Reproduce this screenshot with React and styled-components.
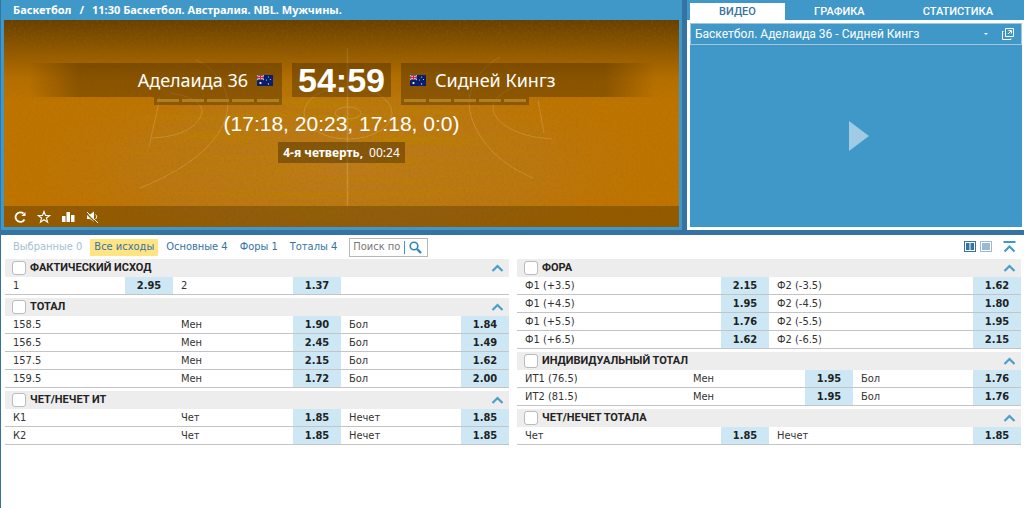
import { useState, useId } from "react"
import styled, { createGlobalStyle } from "styled-components"

const GlobalStyle = createGlobalStyle`
    * {
        box-sizing: border-box;
    }
    body {
        margin: 0;
        background: #fff;
        color: #333;
        font-family: "DejaVu Sans Condensed", "DejaVu Sans", sans-serif;
        font-size: 11px;
        line-height: 14px;
    }
    button, input {
        font: inherit;
        color: inherit;
        margin: 0;
        padding: 0;
        border: 0;
        background: none;
    }
    button {
        cursor: pointer;
    }
`

const Page = styled.div`
    min-height: 100vh;
    border-left: 1px solid #3573a5;
`

const Top = styled.div`
    display: grid;
    grid-template-columns: minmax(0, 681fr) minmax(0, 337fr);
    gap: 5px;
    background: #3573a5;
    padding-bottom: 5px;
    font-family: "Noto Sans", sans-serif;
`

const Game = styled.section`
    display: flex;
    flex-direction: column;
    background: #4098c8;
    padding: 0 3px 3px;
`

const Crumbs = styled.nav`
    display: flex;
    gap: 8px;
    height: 20px;
    padding: 0 9px;
    color: #fff;
    font-weight: bold;
    line-height: 20px;
    white-space: nowrap;
    a {
        color: inherit;
        text-decoration: none;
    }
`

const Court = styled.div`
    position: relative;
    flex: 1;
    display: flex;
    flex-direction: column;
    color: #fff;
    padding-top: 43px;
    background: #bf7400;
`

const CourtPicture = styled.svg`
    position: absolute;
    inset: 0;
    width: 100%;
    height: 100%;
`

const Board = styled.div`
    position: relative;
    flex: 1;
    display: flex;
    flex-direction: column;
    align-items: center;
`

const ScoreLine = styled.div`
    width: 100%;
    display: grid;
    grid-template-columns: 1fr auto 1fr;
    gap: 10px;
    align-items: start;
    padding: 0 24px;
`

const Side = styled.div`
    display: flex;
    flex-direction: column;
    align-items: ${props => props.$home ? "flex-end" : "flex-start"};
`

const TeamName = styled.div`
    width: 100%;
    height: 34px;
    display: flex;
    flex-direction: ${props => props.$home ? "row" : "row-reverse"};
    align-items: center;
    justify-content: flex-end;
    gap: 9px;
    padding: 0 9px;
    font-size: 18px;
    white-space: nowrap;
    background: linear-gradient(${props => props.$home ? "to right" : "to left"}, rgba(60, 35, 0, 0), rgba(60, 35, 0, 0.36) 20%);
`

const Fouls = styled.div`
    display: flex;
    gap: 3px;
    height: 8px;
    padding: 2px 3px 3px;
    background: rgba(60, 35, 0, 0.36);
    span {
        width: 22px;
        background: #b08020;
    }
`

const Score = styled.div`
    height: 34px;
    padding: 0 6px;
    font: bold 34px/34px "Liberation Sans", sans-serif;
    background: rgba(60, 35, 0, 0.36);
`

const Periods = styled.div`
    margin-top: 5px;
    font: 21px/28px "Liberation Sans", sans-serif;
`

const Clock = styled.div`
    display: flex;
    gap: 6px;
    margin-top: 4px;
    padding: 0 5px;
    font-size: 12px;
    line-height: 21px;
    background: rgba(60, 35, 0, 0.42);
`

const CourtBar = styled.div`
    position: relative;
    display: flex;
    align-items: center;
    gap: 10px;
    height: 21px;
    padding: 0 9px;
    background: rgba(40, 25, 0, 0.28);
    button {
        display: flex;
    }
`

const Media = styled.section`
    display: flex;
    flex-direction: column;
    background: #4098c8;
`

const Tabs = styled.div`
    display: flex;
    height: 20px;
    padding: 3px 2px 0 3px;
`

const Tab = styled.button`
    flex: 1 1 auto;
    font-family: Roboto, sans-serif;
    font-weight: 500;
    line-height: 17px;
    color: ${props => props.$active ? "#3573a5" : "#fff"};
    background: ${props => props.$active ? "#fff" : "transparent"};
`

const Frame = styled.div`
    flex: 1;
    display: flex;
    flex-direction: column;
    border: 3px solid #fff;
    border-right-width: 2px;
`

const VideoTitle = styled.div`
    display: flex;
    align-items: center;
    gap: 13px;
    height: 22px;
    padding: 0 7px 0 4px;
    border: 1px solid #a3c4d9;
    color: #fff;
    font-family: Roboto, sans-serif;
    font-size: 12px;
    span {
        flex: 1;
        white-space: nowrap;
    }
    button {
        display: flex;
    }
`

const Screen = styled.div`
    flex: 1;
    display: flex;
    align-items: center;
    justify-content: center;
    min-height: 182px;
    padding-left: 5px;
    button {
        display: flex;
    }
`

const Filters = styled.div`
    display: flex;
    align-items: center;
    gap: 4px;
    height: 24px;
    padding: 0 8px;
`

const Filter = styled.button`
    height: 17px;
    padding: 0 4px;
    white-space: nowrap;
    color: ${props => props.$muted ? "#a5bfd2" : "#3573a5"};
    background: ${props => props.$active ? "#ffe484" : "transparent"};
`

const Search = styled.form`
    display: flex;
    align-items: center;
    width: 79px;
    height: 19px;
    margin-left: 4px;
    padding: 0 5px 0 3px;
    border: 1px solid #b8b8b8;
    input {
        width: 52px;
        height: 13px;
        border-right: 1px solid #4098c8;
        outline: none;
    }
    input::placeholder {
        color: #777;
        opacity: 1;
    }
    button {
        display: flex;
        margin-left: 4px;
    }
`

const ViewButtons = styled.div`
    display: flex;
    gap: 4px;
    margin-left: auto;
    button {
        display: flex;
    }
    button:last-child {
        margin-left: 7px;
    }
`

const Markets = styled.div`
    display: grid;
    grid-template-columns: 1fr 1fr;
    gap: 8px;
    align-items: start;
    padding: 0 3px 0 4px;
`

const MarketBox = styled.section`
    margin-bottom: 3px;
`

const MarketHead = styled.div`
    display: flex;
    align-items: center;
    height: 18px;
    padding: 0 5px 0 7px;
    background: #ededed;
    label {
        flex: 1;
        padding-left: 4px;
        color: #222;
        font-family: Roboto, sans-serif;
        font-weight: bold;
        text-transform: uppercase;
    }
    button {
        display: flex;
    }
`

const Check = styled.input`
    appearance: none;
    width: 14px;
    height: 14px;
    border: 1px solid #bbb;
    border-radius: 3px;
    background: #fff;
    &:checked {
        background: #4098c8;
    }
`

const Table = styled.table`
    width: 100%;
    table-layout: fixed;
    border-collapse: separate;
    border-spacing: 0;
    td {
        height: 18px;
        padding: 0 0 0 8px;
        border-bottom: 1px solid #c4c4c4;
        white-space: nowrap;
    }
    td.price {
        padding: 0;
        background: #cde8f4;
    }
`

const Price = styled.button`
    display: block;
    width: 100%;
    height: 17px;
    color: #222;
    font-weight: bold;
    text-align: center;
`

const layouts = {
    pairThird: ["", "48px", "", "48px", "33.33%"],
    lineThird: ["33.33%", "", "48px", "", "48px"],
    half: ["", "48px", "", "48px"]
}

const leftMarkets = [
    {
        title: "Фактический исход",
        layout: "pairThird",
        rows: [["1", 2.95, "2", 1.37, ""]]
    },
    {
        title: "Тотал",
        layout: "lineThird",
        rows: [
            ["158.5", "Мен", 1.90, "Бол", 1.84],
            ["156.5", "Мен", 2.45, "Бол", 1.49],
            ["157.5", "Мен", 2.15, "Бол", 1.62],
            ["159.5", "Мен", 1.72, "Бол", 2.00]
        ]
    },
    {
        title: "Чет/нечет ИТ",
        layout: "lineThird",
        rows: [
            ["К1", "Чет", 1.85, "Нечет", 1.85],
            ["К2", "Чет", 1.85, "Нечет", 1.85]
        ]
    }
]

const rightMarkets = [
    {
        title: "Фора",
        layout: "half",
        rows: [
            ["Ф1 (+3.5)", 2.15, "Ф2 (-3.5)", 1.62],
            ["Ф1 (+4.5)", 1.95, "Ф2 (-4.5)", 1.80],
            ["Ф1 (+5.5)", 1.76, "Ф2 (-5.5)", 1.95],
            ["Ф1 (+6.5)", 1.62, "Ф2 (-6.5)", 2.15]
        ]
    },
    {
        title: "Индивидуальный тотал",
        layout: "lineThird",
        rows: [
            ["ИТ1 (76.5)", "Мен", 1.95, "Бол", 1.76],
            ["ИТ2 (81.5)", "Мен", 1.95, "Бол", 1.76]
        ]
    },
    {
        title: "Чет/нечет тотала",
        layout: "half",
        rows: [["Чет", 1.85, "Нечет", 1.85]]
    }
]

const Flag = () => (
    <svg width="16" height="11" viewBox="0 0 16 11">
        <rect width="16" height="11" fill="#0a1f6b"/>
        <path d="M0 0L7 5M7 0L0 5" stroke="#fff" strokeWidth="0.8"/>
        <path d="M3.5 0V5M0 2.5H7" stroke="#f3c6d0" strokeWidth="1.8"/>
        <path d="M3.5 0V5M0 2.5H7" stroke="#e0203a" strokeWidth="1"/>
        <circle cx="3.5" cy="8" r="1.1" fill="#fff"/>
        <g fill="#c9d0ea">
            <circle cx="11.5" cy="2" r="0.6"/>
            <circle cx="9.5" cy="5" r="0.6"/>
            <circle cx="13.5" cy="4.5" r="0.6"/>
            <circle cx="11.5" cy="9" r="0.7"/>
        </g>
    </svg>
)

const CourtArt = () => (
    <CourtPicture viewBox="0 0 675 207" preserveAspectRatio="none" aria-hidden="true">
        <defs>
            <linearGradient id="shade" x1="0" y1="0" x2="0" y2="1">
                <stop offset="0" stopColor="#3a2400" stopOpacity="0.66"/>
                <stop offset="0.1" stopColor="#3a2400" stopOpacity="0.45"/>
                <stop offset="0.28" stopColor="#3a2400" stopOpacity="0.08"/>
                <stop offset="0.4" stopColor="#3a2400" stopOpacity="0"/>
            </linearGradient>
            <radialGradient id="light" cx="0.5" cy="0.7" r="0.5">
                <stop offset="0" stopColor="#bd7d26" stopOpacity="0.8"/>
                <stop offset="0.6" stopColor="#ba781c" stopOpacity="0.6"/>
                <stop offset="1" stopColor="#bf7400" stopOpacity="0"/>
            </radialGradient>
            <radialGradient id="planks">
                <stop offset="0.3" stopColor="#fff"/>
                <stop offset="1" stopColor="#000"/>
            </radialGradient>
            <mask id="middle">
                <ellipse cx="330" cy="125" rx="260" ry="95" fill="url(#planks)"/>
            </mask>
            <filter id="grain" x="0" y="0" width="100%" height="100%">
                <feTurbulence type="fractalNoise" baseFrequency="0.4" numOctaves="2" seed="4"/>
                <feColorMatrix values="0 0 0 0 0.3  0 0 0 0 0.15  0 0 0 0 0  0.6 0 0 0 -0.26"/>
            </filter>
            <filter id="wood" x="0" y="0" width="100%" height="100%">
                <feTurbulence type="fractalNoise" baseFrequency="0.008 0.14" numOctaves="3" seed="9"/>
                <feColorMatrix values="0 0 0 0 0.5  0 0 0 0 0.22  0 0 0 0 0  2.2 0 0 0 -0.85"/>
            </filter>
        </defs>
        <rect width="675" height="207" fill="url(#light)"/>
        <g mask="url(#middle)">
            <rect width="675" height="207" filter="url(#wood)"/>
        </g>
        <g fill="none" stroke="#e0b878" strokeOpacity="0.36">
            <path d="M343.5 28V186" strokeWidth="1.5"/>
            <ellipse cx="344" cy="93" rx="44" ry="26"/>
            <ellipse cx="344" cy="93" rx="13" ry="6"/>
            <path d="M192 40C214 50 223 68 224 85C222 118 190 146 136 168"/>
            <path d="M156 77L145 127M166 73C186 76 198 82 198 92C195 107 176 117 148 118"/>
            <path d="M496 37C476 48 465 66 465 84C467 112 490 142 529 158"/>
            <path d="M534 80L540 113M513 66C497 72 488 80 489 90C493 105 515 117 548 119"/>
        </g>
        <rect width="675" height="207" fill="url(#shade)"/>
        <rect width="675" height="207" filter="url(#grain)"/>
    </CourtPicture>
)

const Chevron = () => (
    <svg width="13" height="8" viewBox="0 0 13 8">
        <path d="M1.500 7L6.500 2L11.500 7" fill="none" stroke="#4a9fcc" strokeWidth="2.200"/>
    </svg>
)

const FoulMarks = () => (
    <Fouls>
        {[1, 2, 3, 4, 5].map(n => <span key={n}/>)}
    </Fouls>
)

const Market = (props) => {

    const id = useId()
    const [open, setOpen] = useState(true)

    return (
        <MarketBox>
            <MarketHead>
                <Check type="checkbox" id={id}/>
                <label htmlFor={id}>{props.market.title}</label>
                <button aria-label="Свернуть" onClick={() => setOpen(!open)}><Chevron/></button>
            </MarketHead>
            {open && <Table>
                <colgroup>
                    {layouts[props.market.layout].map((width, i) => <col key={i} width={width || undefined}/>)}
                </colgroup>
                <tbody>
                    {props.market.rows.map((row, r) => (
                        <tr key={r}>
                            {row.map((cell, i) => typeof cell === "number"
                                ? <td key={i} className="price"><Price>{cell.toFixed(2)}</Price></td>
                                : <td key={i}>{cell}</td>
                            )}
                        </tr>
                    ))}
                </tbody>
            </Table>}
        </MarketBox>
    )
}

const Scoreboard = () => (
    <Game>
        <Crumbs>
            <a href="#basketball">Баскетбол</a>
            <span>/</span>
            <a href="#nbl">11:30 Баскетбол. Австралия. NBL. Мужчины.</a>
        </Crumbs>
        <Court>
            <CourtArt/>
            <Board>
                <ScoreLine>
                    <Side $home>
                        <TeamName $home>Аделаида 36<Flag/></TeamName>
                        <FoulMarks/>
                    </Side>
                    <Score>54:59</Score>
                    <Side>
                        <TeamName>Сидней Кингз<Flag/></TeamName>
                        <FoulMarks/>
                    </Side>
                </ScoreLine>
                <Periods>(17:18, 20:23, 17:18, 0:0)</Periods>
                <Clock><b>4-я четверть,</b><span>00:24</span></Clock>
            </Board>
            <CourtBar>
                <button aria-label="Обновить">
                    <svg width="14" height="14" viewBox="0 0 14 14">
                        <path d="M11.500 9.500A4.800 4.800 0 1 1 10.500 3.500" fill="none" stroke="#fff" strokeWidth="1.800"/>
                        <path d="M12.500 2V6H8.500Z" fill="#fff"/>
                    </svg>
                </button>
                <button aria-label="В избранное">
                    <svg width="14" height="14" viewBox="0 0 14 14">
                        <path d="M7 1.500L8.500 5.500H12.700L9.400 8L10.600 12.200L7 9.700L3.400 12.200L4.600 8L1.300 5.500H5.500Z" fill="none" stroke="#fff" strokeWidth="1.100"/>
                    </svg>
                </button>
                <button aria-label="Статистика">
                    <svg width="14" height="14" viewBox="0 0 14 14">
                        <path d="M1 6H4.500V12H1ZM5.500 2H9V12H5.500ZM10 5H13.500V12H10Z" fill="#fff"/>
                    </svg>
                </button>
                <button aria-label="Включить звук">
                    <svg width="14" height="14" viewBox="0 0 14 14">
                        <path d="M2 4.500H5L9 1.500V12L5 9H2Z" fill="#fff"/>
                        <path d="M10.500 4.500C12 5.500 12 8 10.500 9" fill="none" stroke="#fff"/>
                        <path d="M1 3L11 13" stroke="#8f5900" strokeWidth="1.200"/>
                        <path d="M2 2L13 13" stroke="#fff" strokeWidth="1"/>
                    </svg>
                </button>
            </CourtBar>
        </Court>
    </Game>
)

const MediaPanel = () => {

    const [tab, setTab] = useState("ВИДЕО")

    return (
        <Media>
            <Tabs>
                {["ВИДЕО", "ГРАФИКА", "СТАТИСТИКА"].map(name => (
                    <Tab key={name} $active={tab === name} onClick={() => setTab(name)}>{name}</Tab>
                ))}
            </Tabs>
            <Frame>
                <VideoTitle>
                    <span>Баскетбол. Аделаида 36 - Сидней Кингз</span>
                    <button aria-label="Выбрать трансляцию">
                        <svg width="6" height="4" viewBox="0 0 6 4"><path d="M1 1H5L3 3Z" fill="#fff"/></svg>
                    </button>
                    <button aria-label="Открыть в окне">
                        <svg width="12" height="12" viewBox="0 0 12 12" fill="none" stroke="#fff">
                            <path d="M3.500 0.500H11.500V8.500H3.500Z"/>
                            <path d="M0.500 3V11.500H9V10.500M0.500 3.500H1.500"/>
                            <path d="M6 6L9 3M6.500 2.500H9.500V5.500"/>
                        </svg>
                    </button>
                </VideoTitle>
                <Screen>
                    <button aria-label="Смотреть">
                        <svg width="20" height="30" viewBox="0 0 20 30"><path d="M0 0L20 15L0 30Z" fill="#a0cbe3"/></svg>
                    </button>
                </Screen>
            </Frame>
        </Media>
    )
}

const App = () => {

    const [filter, setFilter] = useState("Все исходы")

    return (
        <Page>
            <GlobalStyle/>
            <Top>
                <Scoreboard/>
                <MediaPanel/>
            </Top>
            <Filters>
                {["Выбранные 0", "Все исходы", "Основные 4", "Форы 1", "Тоталы 4"].map(name => (
                    <Filter
                        key={name}
                        $muted={name === "Выбранные 0"}
                        $active={filter === name}
                        onClick={() => setFilter(name)}
                    >{name}</Filter>
                ))}
                <Search onSubmit={e => e.preventDefault()}>
                    <input type="text" aria-label="Поиск" placeholder="Поиск по ..."/>
                    <button aria-label="Найти">
                        <svg width="13" height="13" viewBox="0 0 13 13" fill="none" stroke="#2f86bd">
                            <circle cx="5" cy="5" r="3.800" strokeWidth="1.600"/>
                            <path d="M8 8L12 12" strokeWidth="2.400"/>
                        </svg>
                    </button>
                </Search>
                <ViewButtons>
                    <button aria-label="Две колонки">
                        <svg width="12" height="12" viewBox="0 0 12 12">
                            <rect x="0.500" y="0.500" width="11" height="10" fill="#fff" stroke="#3573a5"/>
                            <path d="M2 2H5.500V9H2ZM6.500 2H10V9H6.500Z" fill="#3573a5"/>
                        </svg>
                    </button>
                    <button aria-label="Одна колонка">
                        <svg width="12" height="12" viewBox="0 0 12 12">
                            <rect x="0.500" y="0.500" width="11" height="10" fill="#fff" stroke="#9ab9d2"/>
                            <path d="M2 2H10V9H2Z" fill="#9ab9d2"/>
                        </svg>
                    </button>
                    <button aria-label="Свернуть все">
                        <svg width="13" height="12" viewBox="0 0 13 12">
                            <path d="M0.500 1H12.500M1.500 10.500L6.500 5.500L11.500 10.500" fill="none" stroke="#4098c8" strokeWidth="2"/>
                        </svg>
                    </button>
                </ViewButtons>
            </Filters>
            <Markets>
                <div>
                    {leftMarkets.map(market => <Market key={market.title} market={market}/>)}
                </div>
                <div>
                    {rightMarkets.map(market => <Market key={market.title} market={market}/>)}
                </div>
            </Markets>
        </Page>
    )
}

export default App
